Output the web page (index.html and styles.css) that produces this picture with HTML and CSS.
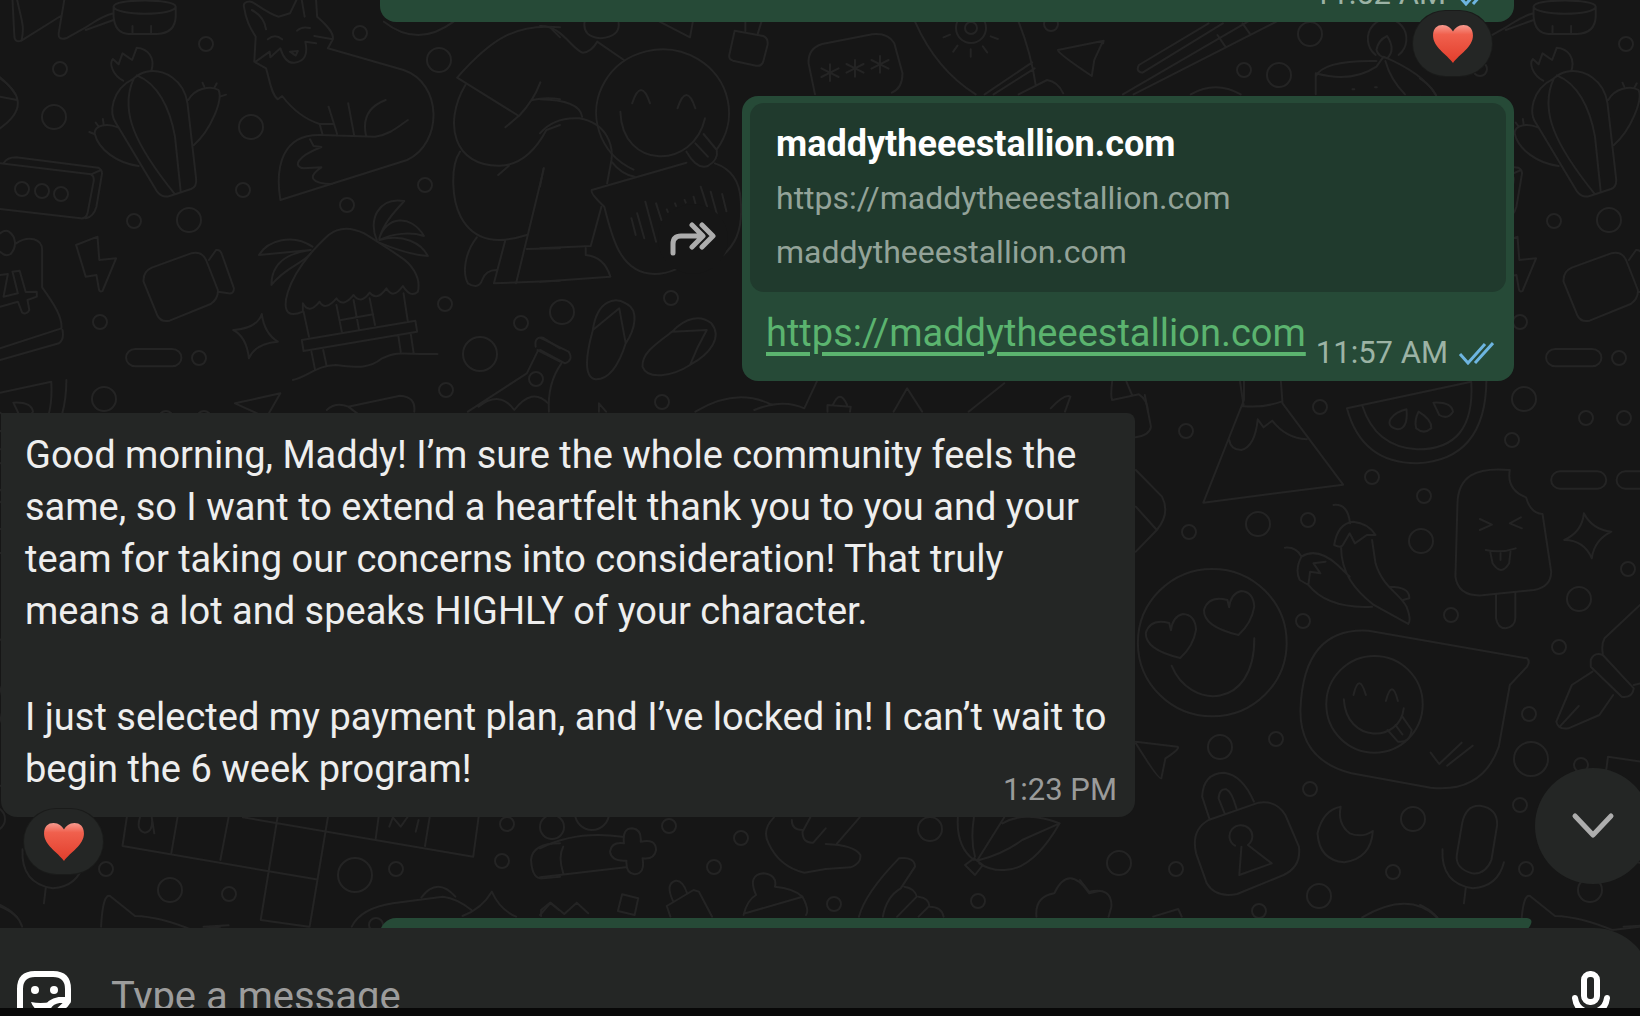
FILE: index.html
```html
<!DOCTYPE html>
<html lang="en">
<head>
<meta charset="utf-8">
<title>Chat</title>
<meta name="viewport" content="width=device-width, initial-scale=1">
<link rel="stylesheet" href="styles.css">
</head>
<body>
<svg class="wallpaper" width="1640" height="1016" viewBox="0 0 1640 1016" aria-hidden="true">
  <defs>
    <circle id="s" r="7"/>
    <circle id="m" r="12"/>
    <circle id="l" r="17"/>
    <path id="ast" d="M0-25V25M-24-13L24 13M24-13L-24 13"/>
    <path id="heart-eye" d="M402 705Q300 680 302 630Q315 585 370 600L375 622Q380 580 410 573Q445 575 448 620Q440 670 402 705Z"/>
    <path id="heart" d="M20 37C14 29 1 22 1 11C1 4 5 1 10 1C15 1 18 4 20 7C22 4 25 1 30 1C35 1 39 4 39 11C39 22 26 29 20 37Z"/>
    <linearGradient id="red" x1="0" y1="0" x2="0" y2="1">
      <stop offset="0" stop-color="#f79a8e"/>
      <stop offset=".25" stop-color="#f0604d"/>
      <stop offset="1" stop-color="#e23e2c"/>
    </linearGradient>
    <g id="tile">
      <g transform="scale(.35714 .33333)">
        <!-- cactus -->
        <path d="M375 235C310 270 305 340 325 370L440 575Q455 595 475 588L535 567Q552 560 549 535L525 310C515 240 460 205 410 215Q390 220 375 235C350 290 360 350 375 390C400 460 450 530 490 583M383 226C440 250 475 320 490 410L506 575M345 242C315 225 305 190 316 177L332 193L343 160L370 180L383 143C415 145 435 175 424 212M527 300C545 265 590 255 612 270C625 300 590 390 543 435M330 382C300 368 265 375 265 400C275 450 330 490 388 498M567 248l5 12M607 250l-6 12M633 284l-15 5M250 396l14 6M288 357l2 14M268 368l7 10"/>
        <!-- cup and ladle -->
        <path d="M318 20C318-5 490-5 492 20C490 48 325 48 318 20V50Q322 100 360 102H440Q490 100 492 50V20M371 78V98M423 78V98M318 40C280 50 260 70 240 82L185 115Q160 122 165 95L180 0M170 48L60 122Q40 130 40 105L35 0M48 0C60 60 70 80 60 122M318 60L240 90"/>
        <!-- fox -->
        <path d="M683 20C680 5 700 0 712 10C740 30 760 45 780 50L812 40L830 0M885 0L888 50C920 80 935 100 932 118L880 108M932 118L918 145L1130 210C1240 250 1240 430 1140 480L785 600C770 500 790 400 900 405L1050 410C1090 405 1115 380 1142 360M683 20C690 70 705 90 716 110L712 185L745 205C755 240 760 285 778 298L790 288C820 330 860 360 895 372H935M895 372L903 403M920 320L944 402M975 310L992 408M1080 300C1030 320 1015 360 1025 408M716 185L755 155L757 172L785 145C795 180 810 190 825 188C855 185 862 160 855 125L885 130M750 118Q770 100 790 118M832 92Q845 78 868 84M868 418l10 20l22 3C830 470 820 500 850 505L900 502C860 530 870 550 930 552M705 30Q740 50 745 88M845 0l8 50M812 155l22-2l-6 14z"/>
        <!-- box, calendar, bolt, camera, sparkle -->
        <path d="M0 490L255 523Q265 530 262 545L245 640Q240 657 225 655L0 627M10 490Q20 472 45 472L275 503Q288 510 285 525L270 620Q262 650 240 655M255 523L283 510"/>
        <path d="M45 730Q70 712 95 718Q118 725 118 750V862C150 910 175 950 172 985L0 1045M175 990Q180 1020 165 1030L0 1080M0 700Q15 688 25 695C45 710 48 740 30 762Q15 772 0 755M0 920L50 905L62 938Q75 945 82 930L77 900L103 890V875L72 876L55 812L35 815L50 880L10 890L22 822L0 825"/>
        <path d="M213 735L273 710L278 780L325 775L287 873Q280 878 277 868L270 825L240 830Z"/>
        <path d="M425 803L535 760Q565 752 577 780L610 870Q612 895 590 912L475 962Q450 968 440 945L402 845Q400 815 425 803ZM585 780L605 750Q618 748 622 765L655 865Q655 882 640 880L610 875"/>
        <path d="M653 990Q720 985 733 942Q740 1000 778 1025Q715 1030 697 1075Q690 1010 653 990Z"/>
        <rect x="353" y="1047" width="155" height="52" rx="26"/>
        <!-- beach hut -->
        <path d="M870 760C800 850 790 920 808 938Q820 948 848 935V910Q865 945 895 905Q910 935 942 895Q960 925 990 885Q1010 915 1035 878Q1055 905 1082 865Q1100 900 1128 858Q1150 895 1170 875C1180 830 1150 790 1120 770C1080 740 1050 720 1020 700Q960 670 920 705Q890 735 870 760M850 935L865 1010M1130 880L1142 965M845 1020L1163 962L1168 995L850 1053ZM872 1055L882 1108M905 1050L914 1095M1115 1005L1122 1055M1150 1000L1158 1058M820 1140C860 1130 890 1095 940 1095C990 1100 1030 1110 1070 1075C1120 1050 1130 1065 1225 1062M942 915L957 995M990 900L1005 988M1035 895L1050 975M955 960L1045 943"/>
        <path d="M875 740C820 700 750 720 725 765L870 750C800 760 760 790 760 855C800 800 850 790 870 760M1055 720C1030 660 1060 590 1132 603C1100 640 1075 670 1062 715C1080 650 1150 640 1187 708C1150 695 1100 700 1062 720C1130 700 1180 730 1198 768C1150 765 1100 745 1062 728"/>
        <!-- bending figure -->
        <path d="M1568 82C1450 70 1380 110 1280 233L1453 348Q1495 300 1513 247M1303 255C1240 370 1270 500 1400 497C1470 495 1510 430 1530 390L1568 375M1415 382l38-35M1490 300Q1530 290 1568 298M1540 82l28 30M1288 455C1260 500 1265 600 1290 650C1330 730 1400 730 1475 705M1395 525l30-28M1523 505L1445 850M1335 712C1300 760 1295 820 1310 850Q1340 870 1350 840Q1360 810 1390 810M1415 720L1383 850L1568 842M1475 747L1568 745M1075 65Q1170 145 1270 65"/>
        <path d="M1310 1235L1475 1120L1505 1055M1500 1040Q1495 1010 1520 1013L1568 1045M1505 1050L1568 1085M1340 1220Q1400 1170 1440 1230Q1490 1160 1535 1210M658 1210L785 1180L745 1255M658 1210L720 1240M915 1230Q940 1205 975 1220L1120 1187Q1165 1190 1160 1235M975 1220L1000 1240M0 235Q100 310 0 385M0 290l48 10"/>
      </g>
      <g transform="translate(540) scale(.35714 .33333)">
        <path d="M0 78C60 75 90 150 120 158Q145 155 160 125L235 180M0 298Q110 300 118 350M0 400Q40 350 110 355C190 370 205 440 200 480L188 550M10 505L0 560M172 620L142 738L0 745M128 745V765Q180 770 197 830L0 845M200 485Q230 525 265 530"/>
        <!-- winking face -->
        <path d="M265 530M262 509A186 190 0 1 1 495 448M258 310Q283 230 308 310M385 325Q410 245 435 325M225 335C230 510 430 510 462 355M410 455Q440 510 470 498Q500 480 495 450L458 402M435 430l35 40"/>
        <!-- voice bubble -->
        <path d="M145 570L410 488M490 490C545 510 560 560 562 600C570 700 540 740 510 768M145 570Q140 580 180 620C200 700 220 820 320 822Q350 822 380 808M256 655l12 50M272 640l20 75M295 605l30 120M325 610l15 50M355 628l3 8M378 610l3 8M405 600l3 8M430 590l5 20M450 560l18 60M478 575l18 70M510 582l12 52"/>
        <path d="M545 92L625 108Q640 115 637 135L625 185Q620 200 605 197L540 182Q528 178 530 165ZM575 92V65M610 100L620 65M335 65L420 112L428 65M125 65Q118 110 170 115Q225 110 220 68"/>
        <path d="M770 283L752 190Q750 145 790 132L930 103Q975 98 992 130L1015 220Q1015 265 985 278"/>
        <use href="#ast" x="812" y="218"/><use href="#ast" x="882" y="205"/><use href="#ast" x="952" y="193"/>
        <!-- rocket and arrow -->
        <path d="M1050 65Q1110 210 1220 283M1340 65Q1375 160 1388 255M1245 283L1378 187M1270 283L1385 205M1340 283L1420 240Q1450 245 1465 280M1130 112l18-8M1157 155l12-18M1206 170v-22M1252 157l-12-18M1282 117l-20-8M1577 130L1578 122L1450 150Q1450 160 1545 228L1552 180L1577 122"/>
        <!-- flip-flops -->
        <path d="M148 990C160 900 210 890 240 910C280 930 265 990 240 1030C220 1100 190 1140 155 1138C120 1130 130 1060 148 990L222 925L240 1030M370 995C410 950 450 945 480 970C510 1010 480 1060 420 1095C370 1130 300 1140 287 1100C285 1060 320 1035 370 995L467 990Q440 1040 420 1095M0 1013L80 1055Q95 1080 70 1090L0 1050M60 1090Q20 1150 25 1235"/>
        <path d="M435 1235Q550 1160 650 1215M600 1230Q680 1195 740 1225L775 1145M990 1235L1028 1165L1070 1235M1200 1235L1300 1150M165 1235V1210L185 1235M805 1235V1215L870 1220L868 1235M820 1215Q840 1165 860 1215M1430 1225Q1470 1180 1485 1190L1470 1235"/>
      </g>
      <g transform="translate(1080) scale(.35714 .33333)">
        <!-- chopsticks and candle -->
        <path d="M360 70L165 195Q155 215 175 218L400 70M550 65L150 283M470 65L120 283M385 105l22 35M455 70l20 30M310 283Q380 240 450 283"/>
        <path d="M660 230Q680 180 830 183M660 283V220Q760 250 830 200L850 170Q960 220 995 283M855 183Q870 240 910 283M830 150Q835 120 860 108Q885 150 860 175Q835 170 830 150M828 165A54 60 0 1 1 892 165M763 268h5M826 262h5"/>
        <path d="M90 1145Q85 1190 90 1200L165 1183Q190 1200 190 1235M130 1145L145 1183M448 1145L458 1215"/>
      </g>
      <g transform="translate(1100 400) scale(.34439 .33333)">
        <!-- watermelon slice -->
        <path d="M717 25L1078-55Q1090 150 920 148Q800 140 762 18M717 25Q760 190 920 190Q1120 180 1122-60M890 28Q895 85 865 88Q830 80 845 55Q860 35 890 28ZM925 35Q965 60 962 85Q940 105 918 85Q912 60 925 35ZM968 8Q1020 5 1025 35Q1010 60 985 45Z"/>
        <!-- mountain -->
        <path d="M418-60V0L300 308L706 254L530 10L525-60M412 18Q470 25 527 5M375 120Q380 150 410 150Q450 140 458 58L475 82L500 62Q540 115 600 118"/>
        <rect x="1310" y="214" width="160" height="52" rx="26"/>
        <rect x="1500" y="214" width="160" height="52" rx="26"/>
        <path d="M1405 340Q1430 390 1485 395Q1435 420 1428 475Q1405 420 1348 420Q1400 395 1405 340Z"/>
        <!-- ice lolly -->
        <path d="M1190 210C1090 200 1040 230 1038 310L1032 530Q1040 590 1110 586L1260 570Q1310 560 1310 515L1285 342Q1250 340 1237 292Q1180 270 1190 210ZM1150 585V655Q1155 685 1178 685Q1205 680 1206 655V578M1103 357L1138 374L1103 390M1222 352L1190 370L1225 385M1120 450Q1165 460 1207 445M1133 455L1140 490Q1165 530 1188 490L1192 455M1163 460V480"/>
        <!-- chillies -->
        <path d="M678 315Q720 310 726 370M680 435Q690 370 735 365Q780 370 800 405L775 405L740 430L725 400L705 435Q700 445 680 435M700 440C700 520 740 570 795 615L895 672Q905 660 890 620C870 580 820 560 800 490L790 420M537 443Q570 440 585 470Q630 440 690 495L725 530M585 470Q565 510 580 540L605 555L610 515L640 520L620 490L655 485M605 555C640 600 700 625 790 620M840 560Q900 560 898 595L880 600"/>
        <!-- heart-eyed face -->
        <ellipse cx="326" cy="728" rx="216" ry="221"/>
        <use href="#heart-eye"/><use href="#heart-eye" x="-169" y="69"/>
        <path d="M208 797C260 930 450 930 448 715"/>
        <!-- sticker bubble -->
        <path d="M780 692L1240 775Q1250 785 1240 800L1190 855L1158 1040Q1110 1180 960 1163L730 1120Q580 1080 582 930Q590 680 780 692Z"/>
        <ellipse cx="797" cy="913" rx="140" ry="145"/>
        <path d="M736 885Q752 815 772 885M830 903Q848 833 865 903M708 898C715 1030 870 1030 882 925M835 990L865 1025Q900 1030 905 990L878 950M858 975l20 28M960 1058L985 1092L1050 1028M1008 1097L1082 1037"/>
        <!-- fountain pen -->
        <path d="M1568 615L1465 715Q1455 735 1460 760M1425 780Q1435 755 1460 765L1550 865Q1545 895 1515 890L1425 800ZM1430 815L1370 855L1325 965Q1330 990 1360 985L1450 945L1490 885M1335 980L1390 918M1550 855L1570 850M1470 1110L1475 1070L1570 1085"/>
        <path d="M104 210L180 290Q205 340 165 390L104 455M104 320L165 390M130-15L148 80Q145 105 104 112M104 1025L225 1040Q235 1045 190 1075L178 1135Q170 1140 104 1030"/>
      </g>
      <g transform="translate(0 780) scale(.35714 .33333)">
        <!-- crossword -->
        <path d="M355 112L343 198L885 298M497 112L480 218M640 112L617 240M777 112L730 420L865 440M918 112L867 440M680 112L1325 230L1340 112M1060 112L1052 175M1203 112L1190 198M392 112Q380 150 405 158Q430 155 425 112L432 160M1090 140L1100 112L1122 140L1145 105M1172 120l-8 35"/>
        <path d="M985 440Q1010 385 1100 370L1240 350Q1280 355 1320 390M1180 352Q1225 290 1275 350M1295 408Q1350 385 1377 335Q1400 390 1445 410M1515 408V390L1540 368L1565 390M1568 190Q1490 190 1487 240Q1490 300 1520 295L1568 290M0 375Q50 400 62 440M570 440L640 436"/>
      </g>
      <g transform="translate(540 780) scale(.35714 .33333)">
        <path d="M0 205Q100 150 230 170M65 200Q50 230 65 280M0 292L240 262M235 190Q230 145 258 145Q285 148 282 185Q325 175 325 210Q320 240 287 235Q295 280 265 283Q240 280 242 242Q200 245 196 215Q200 185 235 190ZM230 343L275 355L265 405L218 393ZM365 410L355 378L430 330L445 335L482 410M372 362Q350 310 380 302Q400 300 412 340M570 405Q580 360 605 345Q580 285 625 280Q665 285 658 320Q710 325 735 350L575 400M735 350Q755 390 745 405M0 405L30 368L68 402L103 368L135 400"/>
        <!-- hands and lily -->
        <path d="M655 112Q620 150 640 190Q670 260 740 278L800 267L870 262Q900 250 897 225Q880 195 800 192M832 190L895 112M800 145L765 188Q735 190 735 155L757 112M735 150Q705 150 705 120M893 410Q910 340 1005 235Q1050 230 1050 260L1010 325Q970 350 960 410M1020 320Q1050 325 1055 350L1000 410M1060 350Q1090 355 1090 378L1060 410M1090 380Q1125 380 1130 410"/>
        <path d="M1170 112Q1165 200 1215 240M1215 112Q1205 180 1218 230M1300 112L1225 240M1230 240Q1300 220 1350 180L1455 130Q1380 270 1300 270Q1260 272 1230 250M1190 255L1215 235L1240 255L1218 285ZM1295 130Q1360 90 1455 130M1390 410Q1385 350 1440 340Q1480 250 1538 340L1568 332"/>
      </g>
      <g transform="translate(1080 780) scale(.35714 .33333)">
        <!-- padlock, moon, microphone, cat -->
        <path d="M362 115L342 50Q345-20 403-22Q455-15 487 65M405 100L388 55Q390 25 410 28Q425 35 438 85M360 120L500 68Q550 60 575 105L613 200Q620 260 570 285L440 342Q380 355 355 310L325 220Q310 150 360 120ZM434 197A32 33 0 1 1 470 195M452 200L446 285L537 250L470 195"/>
        <path d="M730 80Q680 90 665 160Q670 240 740 247Q815 235 820 153Q790 175 755 160Q720 130 730 80Z"/>
        <path d="M1070 130Q1080 75 1120 77Q1170 85 1168 135L1152 240Q1135 285 1098 280Q1050 265 1055 225ZM1015 208Q1010 310 1100 325Q1170 320 1187 247M1080 325L1075 370"/>
        <path d="M790 412Q920 330 1000 412M1235 440Q1240 340 1260 348L1330 408Q1400 410 1490 450L1568 440M0 300L25 335Q90 320 88 380L80 410M205 410L275 387L285 410"/>
      </g>
      <!-- confetti rings -->
      <use href="#s" x="60" y="69"/><use href="#s" x="206" y="44"/><use href="#s" x="360" y="33"/><use href="#s" x="243" y="190"/><use href="#s" x="134" y="221"/><use href="#s" x="347" y="205"/><use href="#s" x="425" y="185"/><use href="#s" x="100" y="322"/><use href="#s" x="445" y="304"/><use href="#s" x="521" y="323"/><use href="#s" x="446" y="390"/><use href="#s" x="199" y="358"/><use href="#s" x="22" y="189"/><use href="#s" x="42" y="191"/><use href="#s" x="61" y="194"/>
      <use href="#m" x="54" y="117"/><use href="#m" x="251" y="127"/><use href="#m" x="439" y="60"/><use href="#m" x="189" y="220"/><use href="#m" x="104" y="399"/><use href="#l" x="480" y="354"/><use href="#m" x="562" y="312"/><use href="#s" x="671" y="298"/><use href="#s" x="662" y="402"/><use href="#s" x="536" y="379"/>
      <circle cx="971" cy="28" r="15"/><circle cx="971" cy="28" r="6"/><use href="#s" x="1051" y="24"/><use href="#m" x="1310" y="34"/><use href="#s" x="1244" y="70"/><use href="#m" x="1279" y="75"/>
      <use href="#s" x="1320" y="407"/><use href="#s" x="1186" y="431"/><use href="#s" x="1189" y="532"/><use href="#m" x="1258" y="524"/><use href="#s" x="1308" y="520"/><use href="#s" x="1372" y="477"/><use href="#s" x="1424" y="496"/><use href="#s" x="1512" y="440"/><use href="#s" x="1586" y="418"/><use href="#s" x="1624" y="418"/><use href="#m" x="1421" y="541"/><use href="#m" x="1579" y="599"/><use href="#s" x="1628" y="569"/><use href="#s" x="1451" y="615"/><use href="#s" x="1303" y="621"/><use href="#s" x="1559" y="647"/><use href="#m" x="1220" y="747"/><use href="#s" x="1276" y="739"/><use href="#s" x="1310" y="789"/><use href="#s" x="1529" y="714"/><use href="#l" x="1531" y="759"/><use href="#s" x="1581" y="765"/><use href="#s" x="1520" y="805"/><use href="#m" x="1413" y="819"/>
      <use href="#m" x="1119" y="863"/><use href="#s" x="1176" y="869"/><use href="#s" x="1393" y="872"/><use href="#m" x="1319" y="896"/><use href="#s" x="1259" y="911"/><use href="#s" x="106" y="869"/><use href="#m" x="170" y="890"/><use href="#s" x="229" y="894"/><use href="#l" x="355" y="875"/><use href="#s" x="396" y="869"/><use href="#s" x="507" y="824"/><use href="#s" x="502" y="861"/><use href="#m" x="552" y="827"/><use href="#s" x="376" y="925"/><use href="#s" x="669" y="826"/><use href="#s" x="741" y="838"/><use href="#s" x="714" y="867"/><use href="#s" x="834" y="904"/><use href="#s" x="978" y="901"/><use href="#m" x="930" y="829"/><use href="#l" x="592" y="813"/>
    </g>
  </defs>
  <use href="#tile"/>
  <use href="#tile" x="1420"/>
  <use href="#tile" x="-1420"/>
</svg>

<main class="chat">
  <div class="row sent">
    <article class="bubble out earlier">
      <div class="meta"><time>11:52 AM</time>
        <svg class="ticks" viewBox="0 0 36 24" role="img" aria-label="Read"><path d="M2 13L10 22L27 3M17 22L35 2"/></svg>
      </div>
      <button class="reaction right" aria-label="Heart reaction"><svg width="42" height="40" viewBox="0 0 40 38"><use href="#heart" fill="url(#red)"/></svg></button>
    </article>
  </div>

  <div class="row sent link-row">
    <button class="forward" aria-label="Forward">
      <svg width="46" height="34" viewBox="0 0 46 34"><path d="M3 31V22Q3 14 11 14H32M22 3L33 14L22 25M32 3L43 14L32 25"/></svg>
    </button>
    <article class="bubble out link-bubble">
      <div class="preview">
        <h2>maddytheeestallion.com</h2>
        <p>https://maddytheeestallion.com</p>
        <p>maddytheeestallion.com</p>
      </div>
      <div class="link-line">
        <a href="https://maddytheeestallion.com">https://maddytheeestallion.com</a>
        <div class="meta"><time>11:57 AM</time>
          <svg class="ticks" viewBox="0 0 36 24" role="img" aria-label="Read"><path d="M2 13L10 22L27 3M17 22L35 2"/></svg>
        </div>
      </div>
    </article>
  </div>

  <div class="row received">
    <article class="bubble in">
      <p>Good morning, Maddy! I’m sure the whole community feels the same, so I want to extend a heartfelt thank you to you and your team for taking our concerns into consideration! That truly means a lot and speaks HIGHLY of your character.</p>
      <p>I just selected my payment plan, and I’ve locked in! I can’t wait to begin the 6 week program!</p>
      <div class="meta"><time>1:23 PM</time></div>
      <button class="reaction left" aria-label="Heart reaction"><svg width="42" height="40" viewBox="0 0 40 38"><use href="#heart" fill="url(#red)"/></svg></button>
    </article>
  </div>

  <div class="row sent next-row">
    <article class="bubble out next">
      <svg class="tail" width="36" height="30" viewBox="0 0 36 30" aria-hidden="true"><path d="M0 0H31Q38 1 34 8L18 30H0Z"/></svg>
    </article>
  </div>

  <button class="scroll-down" aria-label="Scroll to latest"><svg width="44" height="28" viewBox="0 0 44 28"><path d="M4 4L22 23L40 4"/></svg></button>
</main>

<form class="composer">
  <button type="button" aria-label="Stickers">
    <svg width="54" height="54" viewBox="0 0 54 54"><path class="line" d="M51 30V18Q51 3 36 3H18Q3 3 3 18V36Q3 51 18 51H28Q30 51 32 49L49 33Q51 31 51 29H42Q30 31 30 42V50"/><circle cx="18" cy="19" r="4"/><circle cx="37" cy="19" r="4"/><path d="M14 31Q23 33 34 31L31 36L27 41Q17 40 14 31Z"/></svg>
  </button>
  <input type="text" aria-label="Message" placeholder="Type a message">
  <button type="button" aria-label="Record voice message">
    <svg width="40" height="54" viewBox="0 0 40 54"><rect class="line" x="13" y="3" width="13" height="28" rx="6"/><path class="line" d="M4 27Q6 41 20 41Q34 41 36 27M20 41V51"/></svg>
  </button>
</form>
</body>
</html>
```
FILE: styles.css
```css
* {
  box-sizing: border-box;
}

body {
  margin: 0;
  height: 100vh;
  overflow: hidden;
  display: flex;
  flex-direction: column;
  position: relative;
  border-bottom: 8px solid #080808;
  background: #161616;
  color: #eeeeee;
  font-family: Roboto, "Liberation Sans", sans-serif;
  font-size: 38px;
  line-height: 52px;
}

button {
  border: 0;
  padding: 0;
  display: grid;
  place-items: center;
  cursor: pointer;
}

h2,
p {
  margin: 0;
}

.wallpaper {
  position: absolute;
  top: 0;
  left: 0;
  z-index: -1;
  fill: none;
  stroke: #242424;
  stroke-width: 2px;
  stroke-linecap: round;
  stroke-linejoin: round;
}

.wallpaper path,
.wallpaper rect,
.wallpaper ellipse {
  vector-effect: non-scaling-stroke;
}

/* Messages */

.chat {
  flex: 1;
  min-height: 0;
  display: flex;
  flex-direction: column;
  position: relative;
}

.row {
  display: flex;
  flex: none;
}

.sent {
  justify-content: flex-end;
  padding-right: 126px;
}

.bubble {
  position: relative;
  border-radius: 16px;
}

.out {
  background: #264a37;
}

.in {
  background: #242625;
}

.earlier {
  width: 1134px;
  margin-top: -32px;
  padding: 8px 22px 10px;
}

.link-row {
  align-items: center;
  gap: 14px;
  margin-top: 74px;
}

.link-bubble {
  width: 772px;
  padding: 7px 8px 10px;
}

.preview {
  padding: 14px 26px 13px;
  border-radius: 14px;
  background: #203a2d;
  color: #93a399;
  font-size: 32px;
  line-height: 54px;
}

.preview h2 {
  color: #ffffff;
  font-size: 36px;
  font-weight: 700;
}

.link-line {
  display: flex;
  justify-content: space-between;
  padding: 15px 12px 0 16px;
}

.link-line a {
  height: 64px;
  color: #5bb46f;
  text-decoration-thickness: 4px;
  text-underline-offset: 6px;
}

.meta {
  display: flex;
  align-items: center;
  align-self: flex-end;
  justify-content: flex-end;
  gap: 10px;
  color: #9cb3a5;
  font-size: 31px;
  line-height: 36px;
}

.ticks {
  width: 36px;
  height: 24px;
  fill: none;
  stroke: #6db5e0;
  stroke-width: 3px;
}

.received {
  margin-top: 32px;
  padding-left: 1px;
}

.in {
  width: 1134px;
  padding: 16px 18px 9px 24px;
  border-radius: 0 8px 16px 16px;
}

.in p + p {
  margin-top: 54px;
}

.in .meta {
  margin-top: -23px;
  color: #9a9b9a;
}

.reaction {
  position: absolute;
  width: 79px;
  height: 65px;
  border-radius: 33px;
  background: #242625;
  box-shadow: 0 0 0 1px #1a1b1a;
}

.reaction.right {
  right: 22px;
  bottom: -54px;
}

.reaction.left {
  left: 23px;
  bottom: -57px;
}

.forward {
  width: 70px;
  height: 70px;
  border-radius: 50%;
  background: #161616;
}

.forward svg,
.scroll-down svg {
  fill: none;
  stroke: #adadad;
  stroke-width: 5px;
  stroke-linecap: round;
  stroke-linejoin: round;
}

.next-row {
  margin-top: 101px;
}

.next {
  width: 1134px;
  height: 60px;
}

.tail {
  position: absolute;
  top: 0;
  right: -18px;
  fill: #264a37;
}

.scroll-down {
  position: absolute;
  right: -11px;
  bottom: 44px;
  width: 116px;
  height: 116px;
  border-radius: 50%;
  background: #242625;
}

/* Message box */

.composer {
  position: relative;
  flex: none;
  display: flex;
  align-items: flex-start;
  gap: 40px;
  height: 80px;
  margin-right: -12px;
  padding: 43px 41px 0 17px;
  overflow: hidden;
  border-radius: 0 58px 0 0;
  background: #242625;
}

.composer button {
  background: none;
}

.composer svg {
  fill: #ffffff;
}

.composer .line {
  fill: none;
  stroke: #ffffff;
  stroke-width: 6px;
  stroke-linejoin: round;
  stroke-linecap: round;
}

.composer input {
  flex: 1;
  min-width: 0;
  height: 52px;
  padding: 0;
  border: 0;
  outline: 0;
  background: none;
  color: #eeeeee;
  font: inherit;
  font-size: 40px;
}

.composer input::placeholder {
  color: #9c9c9c;
  opacity: 1;
}
```
